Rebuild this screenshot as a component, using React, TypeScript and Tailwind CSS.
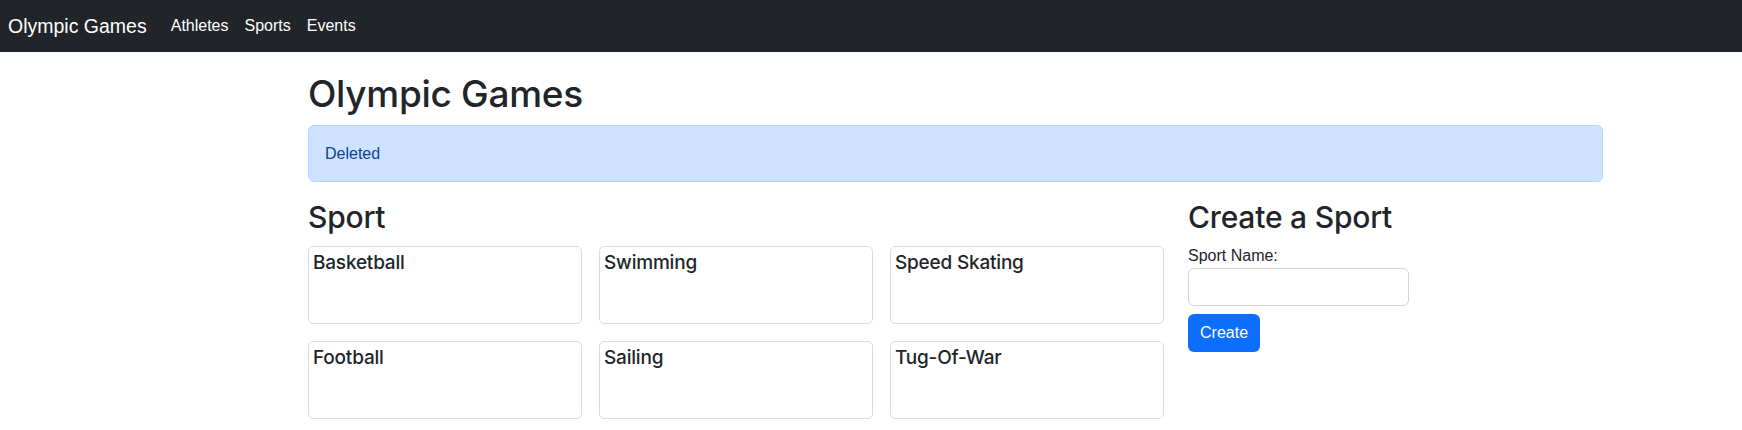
const sports = ['Basketball', 'Swimming', 'Speed Skating', 'Football', 'Sailing', 'Tug-Of-War']

function Navbar() {
  return (
    <nav className="h-[52px] bg-[#212529] flex items-center px-2">
      <a href="#" className="text-[19.5px] leading-[30px] text-white mr-4 no-underline">
        Olympic Games
      </a>
      <div className="flex items-center">
        {['Athletes', 'Sports', 'Events'].map((link) => (
          <a key={link} href="#" className="text-base leading-6 text-white px-2 no-underline">
            {link}
          </a>
        ))}
      </div>
    </nav>
  )
}

function SportCard({ name }: { name: string }) {
  return (
    <div className="h-[78px] border border-[#dcdcdc] rounded-[5px] px-1 pt-1 bg-white">
      <h5 className="font-['Inter',sans-serif] font-medium text-[19px] leading-6 tracking-[-0.2px] text-[#212529]">
        {name}
      </h5>
    </div>
  )
}

export default function App() {
  return (
    <div className="min-h-screen bg-white font-['Liberation_Sans',Arial,sans-serif] text-[#212529]">
      <Navbar />

      <main className="ml-[308px] w-[1295px] pt-[18px]">
        <h1 className="font-['Inter',sans-serif] text-[37px] leading-[48px] font-medium tracking-[-0.3px]">
          Olympic Games
        </h1>

        <div className="mt-[7px] mb-4 h-[57px] bg-[#cfe2ff] border border-[#b6d4fe] rounded-[6px] px-4 flex items-center text-[#084298] text-base">
          Deleted
        </div>

        <div className="flex gap-6">
          {/* Sports list */}
          <section className="w-[856px]">
            <h2 className="font-['Inter',sans-serif] text-[30px] leading-[38px] font-medium tracking-[-0.2px] mb-[10px]">
              Sport
            </h2>
            <div className="grid grid-cols-3 gap-[17px]">
              {sports.map((s) => (
                <SportCard key={s} name={s} />
              ))}
            </div>
          </section>

          {/* Create form */}
          <section className="flex-1">
            <h2 className="font-['Inter',sans-serif] text-[30px] leading-[38px] font-medium tracking-[-0.2px] mb-2">
              Create a Sport
            </h2>
            <label className="block text-base leading-6">Sport Name:</label>
            <input
              type="text"
              className="block w-[221px] h-[38px] border border-[#ced4da] rounded-[6px] px-3 outline-none"
            />
            <button
              type="button"
              className="mt-2 h-[38px] px-3 bg-[#0d6efd] text-white text-base rounded-[6px]"
            >
              Create
            </button>
          </section>
        </div>
      </main>
    </div>
  )
}
